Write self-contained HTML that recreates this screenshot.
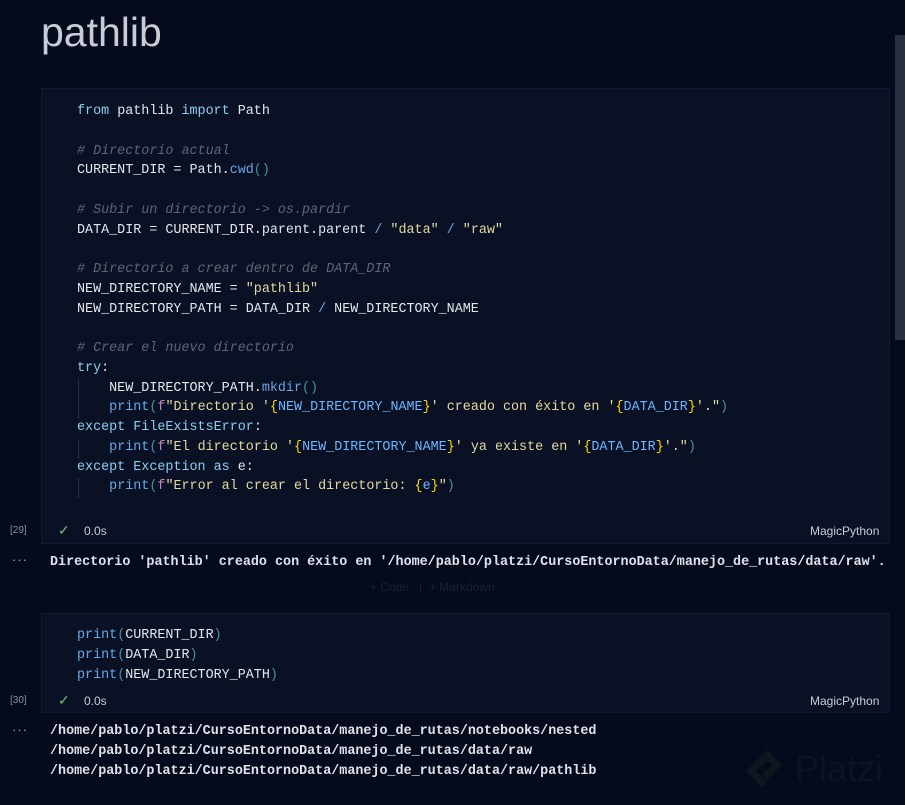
<!DOCTYPE html>
<html><head><meta charset="utf-8"><style>
body{margin:0;width:905px;height:805px;background:#050b1d;overflow:hidden;position:relative;font-family:"Liberation Sans",sans-serif}
.h{position:absolute;left:41px;top:9px;font-size:41px;color:#c8ccd4}
.cell{position:absolute;left:41px;width:847px;background:#0a1124;border:1px solid #111a2e}
.code{position:absolute;left:77px;font-family:"Liberation Mono",monospace;font-size:13.4px;line-height:19.75px;color:#e4e6ea;white-space:pre}
.k{color:#8ecdf0}.c{color:#5c6675;font-style:italic}.f{color:#6aa6e8}.s{color:#e4d9a0}.p{color:#c586c0}.b{color:#ffd700}.v{color:#6cb6ff}.pa{color:#4b8fa0}
.guide{position:absolute;left:78px;width:1px;background:#2a3245}
.foot{position:absolute;font-size:12px;color:#c8ccd4}
.out{position:absolute;left:50px;font-family:"Liberation Mono",monospace;font-size:13.4px;font-weight:bold;color:#dfe2e8;white-space:pre;line-height:19.75px}
.dots{position:absolute;left:12px;color:#aab;font-size:13px;letter-spacing:1px}
</style></head><body>
<div class="h">pathlib</div>
<div style="position:absolute;right:0;top:35px;width:10px;height:305px;background:#2a3040"></div>
<div class="cell" style="top:88px;height:454px"></div>
<div class="guide" style="top:379px;height:40px"></div>
<div class="guide" style="top:439px;height:20px"></div>
<div class="guide" style="top:478px;height:20px"></div>
<div class="code" style="top:102px"><span class="k">from</span> pathlib <span class="k">import</span> Path

<span class="c"># Directorio actual</span>
CURRENT_DIR = Path.<span class="f">cwd</span><span class="pa">()</span>

<span class="c"># Subir un directorio -&gt; os.pardir</span>
DATA_DIR = CURRENT_DIR.parent.parent <span class="f">/</span> <span class="s">"data"</span> <span class="f">/</span> <span class="s">"raw"</span>

<span class="c"># Directorio a crear dentro de DATA_DIR</span>
NEW_DIRECTORY_NAME = <span class="s">"pathlib"</span>
NEW_DIRECTORY_PATH = DATA_DIR <span class="f">/</span> NEW_DIRECTORY_NAME

<span class="c"># Crear el nuevo directorio</span>
<span class="k">try</span>:
    NEW_DIRECTORY_PATH.<span class="f">mkdir</span><span class="pa">()</span>
    <span class="f">print</span><span class="pa">(</span><span class="p">f</span><span class="s">"Directorio '</span><span class="b">{</span><span class="v">NEW_DIRECTORY_NAME</span><span class="b">}</span><span class="s">' creado con éxito en '</span><span class="b">{</span><span class="v">DATA_DIR</span><span class="b">}</span><span class="s">'."</span><span class="pa">)</span>
<span class="k">except</span> <span class="k">FileExistsError</span>:
    <span class="f">print</span><span class="pa">(</span><span class="p">f</span><span class="s">"El directorio '</span><span class="b">{</span><span class="v">NEW_DIRECTORY_NAME</span><span class="b">}</span><span class="s">' ya existe en '</span><span class="b">{</span><span class="v">DATA_DIR</span><span class="b">}</span><span class="s">'."</span><span class="pa">)</span>
<span class="k">except</span> <span class="k">Exception</span> <span class="k">as</span> e:
    <span class="f">print</span><span class="pa">(</span><span class="p">f</span><span class="s">"Error al crear el directorio: </span><span class="b">{</span><span class="v">e</span><span class="b">}</span><span class="s">"</span><span class="pa">)</span></div>
<div class="foot" style="left:10px;top:525px;font-size:10px;color:#8a8f99">[29]</div>
<div class="foot" style="left:58px;top:522px;color:#6fbf73;font-size:14px">✓</div>
<div class="foot" style="left:84px;top:524px">0.0s</div>
<div class="foot" style="left:810px;top:524px">MagicPython</div>
<div class="dots" style="top:552px">···</div>
<div class="out" style="top:553px">Directorio 'pathlib' creado con éxito en '/home/pablo/platzi/CursoEntornoData/manejo_de_rutas/data/raw'.</div>
<div style="position:absolute;left:370px;top:580px;font-size:12px;color:#1a2133">+ Code &nbsp;&nbsp;|&nbsp; + Markdown</div>
<div class="cell" style="top:613px;height:98px"></div>
<div class="code" style="top:626px"><span class="f">print</span><span class="pa">(</span>CURRENT_DIR<span class="pa">)</span>
<span class="f">print</span><span class="pa">(</span>DATA_DIR<span class="pa">)</span>
<span class="f">print</span><span class="pa">(</span>NEW_DIRECTORY_PATH<span class="pa">)</span></div>
<div class="foot" style="left:10px;top:695px;font-size:10px;color:#8a8f99">[30]</div>
<div class="foot" style="left:58px;top:692px;color:#6fbf73;font-size:14px">✓</div>
<div class="foot" style="left:84px;top:694px">0.0s</div>
<div class="foot" style="left:810px;top:694px">MagicPython</div>
<div class="dots" style="top:722px">···</div>
<div class="out" style="top:722px">/home/pablo/platzi/CursoEntornoData/manejo_de_rutas/notebooks/nested
/home/pablo/platzi/CursoEntornoData/manejo_de_rutas/data/raw
/home/pablo/platzi/CursoEntornoData/manejo_de_rutas/data/raw/pathlib</div>
<svg style="position:absolute;left:742px;top:744px" width="50" height="50" viewBox="0 0 50 50"><path d="M25 6 L40 21 L25 36 L20 31 L30 21 L25 16 L14 27 L25 38 L20 43 L4 27 Z" fill="#10161f"/></svg>
<div style="position:absolute;left:795px;top:748px;font-size:36px;color:#0d1324">Platzi</div>
</body></html>
